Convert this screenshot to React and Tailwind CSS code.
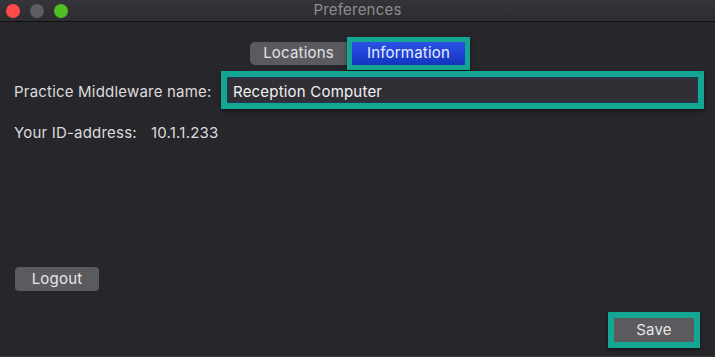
import React from 'react';

const font = { fontFamily: '"Inter", "Liberation Sans", sans-serif' };

export default function App() {
  return (
    <div className="w-[715px] h-[357px] bg-[#27262b] flex flex-col overflow-hidden text-[#dcdcde] tracking-[0.2px]" style={font}>
      {/* title bar */}
      <div className="relative h-[22px] shrink-0 bg-gradient-to-b from-[#353438] to-[#2d2c30] border-b border-[#0f0f10] flex items-center">
        <div className="flex items-center gap-[10px] pl-[6px]">
          <span className="w-[14px] h-[14px] rounded-full bg-[#fe4a4a]" />
          <span className="w-[14px] h-[14px] rounded-full bg-[#5d5c60]" />
          <span className="w-[14px] h-[14px] rounded-full bg-[#50bd25]" />
        </div>
        <div className="absolute inset-0 flex items-center justify-center text-[15px] text-[#8d8c90]">
          Preferences
        </div>
      </div>

      {/* tabs */}
      <div className="flex items-center pl-[250px] mt-[15px]">
        <div className="w-[97px] h-[23px] rounded-l-[5px] bg-[#5b5a5e] flex items-center justify-center text-[15px] text-[#e2e2e4]">
          Locations
        </div>
        <div className="border-[5px] border-[#14a692] shadow-[0_2px_4px_rgba(0,0,0,0.5)]">
          <div className="w-[113px] h-[23px] bg-gradient-to-b from-[#2b52e6] via-[#1f43d6] to-[#1434bd] flex items-center justify-center text-[15px] text-[#e8ecff]">
            Information
          </div>
        </div>
      </div>

      {/* name row */}
      <div className="flex items-center mt-[1px]">
        <div className="w-[221px] pl-[14px] pt-[5px] text-[15px]">Practice Middleware name:</div>
        <div className="w-[483px] border-[6px] border-[#14a692] shadow-[0_2px_4px_rgba(0,0,0,0.5)]">
          <div className="h-[26px] bg-[#302f34] border border-[#24345a] flex items-center pl-[5px] pt-[5px] text-[15px] text-[#f2f2f4]">
            Reception Computer
          </div>
        </div>
      </div>

      {/* id row */}
      <div className="flex items-center mt-[13px] pl-[14px] text-[15px]">
        <span className="w-[137px]">Your ID-address:</span>
        <span>10.1.1.233</span>
      </div>

      <div className="flex-1" />

      {/* logout */}
      <div className="pl-[15px]">
        <div className="w-[84px] h-[24px] rounded-[4px] bg-[#5b5a5e] flex items-center justify-center text-[15px] text-[#e6e6e8]">
          Logout
        </div>
      </div>

      {/* save */}
      <div className="flex justify-end pr-[15px] mt-[21px]">
        <div className="border-[6px] border-[#14a692] shadow-[0_2px_4px_rgba(0,0,0,0.5)]">
          <div className="w-[80px] h-[24px] bg-[#5b5a5e] flex items-center justify-center text-[15px] text-[#e6e6e8]">
            Save
          </div>
        </div>
      </div>

      <div className="h-[9px] shrink-0 border-b border-[#3a393e]" />
    </div>
  );
}
